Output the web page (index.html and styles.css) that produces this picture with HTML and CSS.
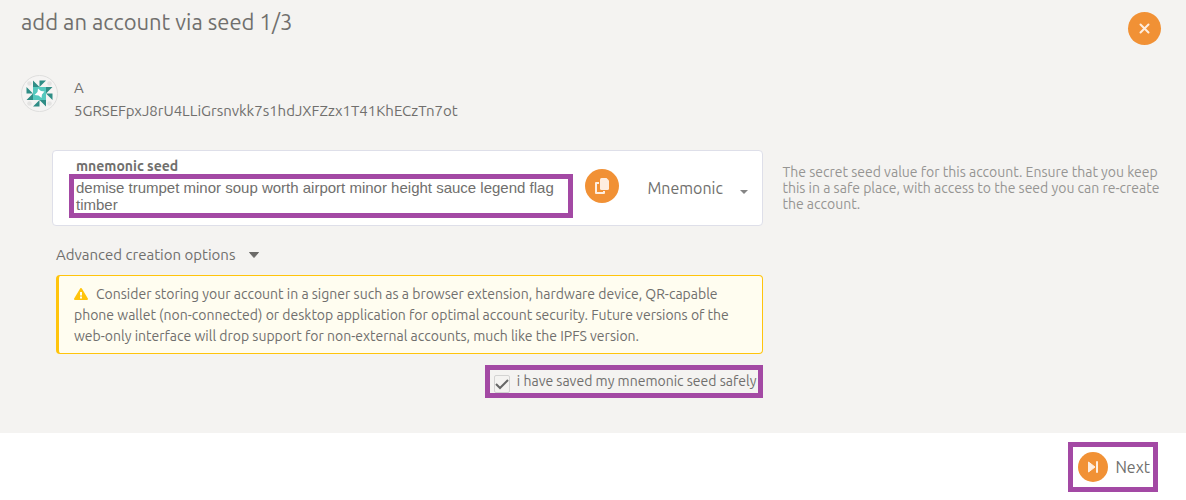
FILE: index.html
```html
<!DOCTYPE html>
<html lang="en">
<head>
<meta charset="utf-8">
<title>add an account via seed 1/3</title>
<link rel="stylesheet" href="styles.css">
</head>
<body>
<form class="modal">
  <div class="body">
    <header class="header">
      <h1 class="title">add an account via seed 1/3</h1>
      <button class="round close" type="button" aria-label="Close">
        <svg width="11" height="11" viewBox="0 0 11 11"><path d="M1.500 1.500l8 8M9.500 1.500l-8 8" fill="none" stroke="#feeee0" stroke-width="2" stroke-linecap="round"/></svg>
      </button>
    </header>

    <section class="account">
      <svg class="identicon" width="37" height="37" viewBox="0 0 37 37">
        <circle cx="18.5" cy="18.5" r="18" fill="#f5f4f3" stroke="#dededd"/>
        <g fill="#e3e3e2"><circle cx="8.5" cy="8.5" r="2.3"/><circle cx="28.5" cy="8.5" r="2.3"/><circle cx="8.5" cy="28.5" r="2.3"/><circle cx="28.5" cy="28.5" r="2.3"/></g>
        <path fill="#55c8be" d="M12 12h13v13H12z"/>
        <path fill="#fff" d="M17 13.500l3 2.500 3.500.5-2.500 3-.5 3.500-3-2.500-4-.5 3-3z"/>
        <g fill="#2f8d86"><path d="M12 5.500v6.500h6.500zM18.500 5.500H25L18.500 12zM31.500 12H25v6.500zM31.500 18.500V25L25 18.500zM25 31.500V25h-6.500zM18.500 31.500H12L18.500 25zM5.500 25H12v-6.500zM5.500 18.500V12L12 18.500z"/></g>
      </svg>
      <div class="identity">
        <div>A</div>
        <div>5GRSEFpxJ8rU4LLiGrsnvkk7s1hdJXFZzx1T41KhECzTn7ot</div>
      </div>
    </section>

    <section class="columns">
      <div class="main">
        <div class="seed">
          <div class="field">
            <label class="label" for="seed">mnemonic seed</label>
            <textarea class="phrase marked" id="seed" rows="2" spellcheck="false">demise trumpet minor soup worth airport minor height sauce legend flag timber</textarea>
          </div>
          <button class="round copy" type="button" aria-label="Copy">
            <svg width="14" height="16" viewBox="0 0 14 16"><path fill="#feeee0" d="M6.500 0h5L14 2.500v8q0 1.500-1.500 1.500h-6Q5 12 5 10.500v-9Q5 0 6.500 0z"/><path fill="none" stroke="#feeee0" stroke-width="2" stroke-linejoin="round" d="M4 5H1v10h8v-2"/></svg>
          </button>
          <div class="type">
            <select class="select" aria-label="Seed type"><option>Mnemonic</option><option>Raw seed</option></select>
            <svg class="arrow" width="8" height="4" viewBox="0 0 8 4"><path fill="#858585" d="M0 0h8L4 4z"/></svg>
          </div>
        </div>
        <button class="advanced" type="button">Advanced creation options
          <svg width="10" height="6" viewBox="0 0 10 6"><path fill="#6b6a68" stroke="#6b6a68" stroke-linejoin="round" d="M.5.5h9L5 5.500z"/></svg>
        </button>
        <p class="warning"><svg class="alert" width="14" height="12" viewBox="0 0 14 12"><path fill="#ffc40c" stroke="#ffc40c" stroke-width="2" stroke-linejoin="round" d="M7 1l6 10H1z"/><path stroke="#fffdf0" stroke-width="2" d="M7 4v3.500M7 8.500v2"/></svg>Consider storing your account in a signer such as a browser extension, hardware device, QR-capable phone wallet (non-connected) or desktop application for optimal account security. Future versions of the web-only interface will drop support for non-external accounts, much like the IPFS version.</p>
        <label class="confirm marked"><input class="check" type="checkbox" checked><span>i have saved my mnemonic seed safely</span></label>
      </div>
      <p class="help">The secret seed value for this account. Ensure that you keep this in a safe place, with access to the seed you can re-create the account.</p>
    </section>
  </div>

  <footer class="footer">
    <button class="next marked" type="button">
      <span class="round step"><svg width="10" height="12" viewBox="0 0 10 12"><path fill="#feeee0" stroke="#feeee0" stroke-linejoin="round" d="M.5 1v10L7 6z"/><path stroke="#feeee0" stroke-width="2" stroke-linecap="round" d="M9 1v10"/></svg></span>
      Next
    </button>
  </footer>
</form>
</body>
</html>
```
FILE: styles.css
```css
* {
  box-sizing: border-box;
}

body {
  margin: 0;
  background: #fff;
  color: #706f6d;
  font: 15px/23px "Ubuntu", "Noto Sans", sans-serif;
}

button,
select,
textarea {
  margin: 0;
  padding: 0;
  border: 0;
  background: none;
  color: inherit;
  font: inherit;
}

.body {
  padding: 6px 21px 35px;
  background: #f4f3f1;
}

.header {
  display: flex;
  align-items: flex-start;
  justify-content: space-between;
  padding-right: 4px;
}

.title {
  margin: 0;
  font-size: 22px;
  font-weight: 400;
  line-height: 32px;
}

.round {
  display: flex;
  flex: none;
  align-items: center;
  justify-content: center;
  width: 34px;
  height: 34px;
  border-radius: 50%;
  background: #f19135;
}

.close {
  width: 33px;
  height: 33px;
  margin-top: 6px;
}

.account {
  display: flex;
  gap: 16px;
  margin-top: 30px;
}

.identicon {
  flex: none;
}

.identity {
  padding-top: 1px;
}

.columns {
  display: grid;
  grid-template-columns: 65fr 35fr;
  gap: 20px;
  margin-top: 28px;
  padding-left: 31px;
  padding-right: 0;
}

.main {
  display: flex;
  flex-direction: column;
  margin-right: -1px;
}

.seed {
  display: flex;
  align-items: center;
  padding: 7px 14px 7px 16px;
  border: 1px solid #dedfe9;
  border-radius: 4px;
  background: #fff;
}

.field {
  display: flex;
  flex: 1;
  flex-direction: column;
}

.label {
  padding-left: 7px;
  font-size: 14px;
  font-weight: 700;
  line-height: 16px;
}

.marked {
  border: 5px solid #a349a4;
}

.phrase {
  width: 100%;
  height: 44px;
  padding: 0 2px;
  overflow: hidden;
  resize: none;
  font: 15px/17px "Liberation Sans", Arial, sans-serif;
}

.copy {
  margin: 0 28px 4px 12px;
}

.type {
  display: flex;
  align-items: center;
  width: 101px;
  font-size: 16px;
}

.select {
  flex: 1;
  min-width: 0;
  appearance: none;
}

.arrow {
  margin-top: 7px;
}

.advanced {
  display: flex;
  align-items: center;
  align-self: flex-start;
  gap: 14px;
  margin: 17px 0 9px 4px;
}

.warning {
  margin: 0 0 11px 4px;
  padding: 8px 30px 6px 15px;
  border: 1px solid #ffc40c;
  border-left-width: 3px;
  border-radius: 4px;
  background: #fffdf0;
  font-size: 14px;
  line-height: 21px;
}

.alert {
  margin-right: 8px;
  vertical-align: -1px;
}

.confirm {
  display: flex;
  align-items: center;
  align-self: flex-end;
  gap: 7px;
  height: 33px;
  padding: 0 2px 0 4px;
  font-size: 14px;
}

.check {
  width: 16px;
  height: 18px;
  margin: 4px 0 0;
  appearance: none;
  border: 1px solid #d3d3d2;
  border-radius: 2px;
  background: url("data:image/svg+xml,%3Csvg xmlns='http://www.w3.org/2000/svg' viewBox='0 0 14 14'%3E%3Cpath d='M1 7l4 4 8-8' fill='none' stroke='%23666' stroke-width='2'/%3E%3C/svg%3E") center / 14px no-repeat;
}

.help {
  margin: 14px 0 0;
  color: #969593;
  font-size: 14px;
  line-height: 16px;
}

.footer {
  display: flex;
  justify-content: flex-end;
  padding: 9px 28px 8px;
}

.next {
  display: flex;
  align-items: center;
  gap: 7px;
  height: 50px;
  padding: 0 3px 0 5px;
  font-size: 16px;
}

.step {
  width: 30px;
  height: 30px;
}
```
